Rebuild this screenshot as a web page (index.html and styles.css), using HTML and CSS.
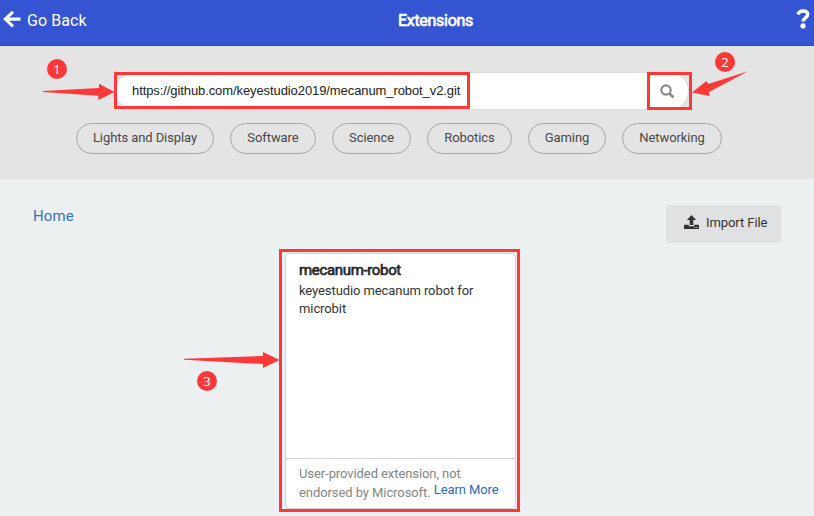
FILE: index.html
```html
<!DOCTYPE html>
<html lang="en">
<head>
<meta charset="utf-8">
<title>Extensions</title>
<link rel="stylesheet" href="styles.css">
</head>
<body>
<header class="topbar">
  <a class="back"><svg width="18" height="18" viewBox="0 0 18 18"><path d="M10 1.8 2.3 9.1 10 16.4M3 9.1H17.5" fill="none" stroke="#fff" stroke-width="3.1"/></svg><span>Go Back</span></a>
  <h1>Extensions</h1>
  <svg class="help" width="14" height="20" viewBox="0 0 14 20"><path d="M1.8 5.2C3 2.7 4.7 1.9 7 1.9c2.9 0 4.7 1.5 4.7 3.7 0 3.3-4.6 3.3-4.6 6.9" fill="none" stroke="#fff" stroke-width="3.5"/><circle cx="7" cy="16.9" r="2.6" fill="#fff"/></svg>
</header>
<section class="search-area">
  <div class="search">
    <span class="url">https://github.com/keyestudio2019/mecanum_robot_v2.git</span>
    <svg class="glass" width="15" height="15" viewBox="0 0 15 15"><circle cx="6" cy="6" r="4.7" fill="none" stroke="#8a8a8a" stroke-width="2.2"/><path d="m9.5 9.5 4 4" stroke="#8a8a8a" stroke-width="2.5"/></svg>
  </div>
  <nav class="tags">
    <a class="tag lights">Lights and Display</a><a class="tag software">Software</a><a class="tag science">Science</a><a class="tag robotics">Robotics</a><a class="tag gaming">Gaming</a><a class="tag networking">Networking</a>
  </nav>
</section>
<main>
  <div class="toolbar">
    <a class="home">Home</a>
    <button class="import"><svg width="15" height="15" viewBox="0 0 15 15"><path d="M7.5 0 12.2 5H9.3v5H5.7V5H2.8zM0 9.7h4.7v1.5h5.6V9.7H15V14H0z" fill="#333"/><path d="M10.3 12.5h1m1 0h1" stroke="#e0e1e2"/></svg><span>Import File</span></button>
  </div>
  <article class="card">
    <div class="content">
      <h2>mecanum-robot</h2>
      <p>keyestudio mecanum robot for microbit</p>
    </div>
    <footer>User-provided extension, not<br>endorsed by Microsoft. <a>Learn More</a></footer>
  </article>
</main>
<div class="mark mark-url"></div>
<div class="mark mark-search"></div>
<div class="mark mark-card"></div>
<svg class="arrows" width="814" height="516" viewBox="0 0 814 516" fill="#fd3838">
  <path d="M43 91 99 88V83.7L114.5 92 98.3 100V95.8L43 92z"/>
  <path d="M692 92.5 706.5 81 708.3 84 748 71.3 709 92 709.7 96z"/>
  <path d="M184 358.8 263 356V352L279.5 360 263 368V364L184 359.8z"/>
</svg>
<span class="badge one">1</span>
<span class="badge two">2</span>
<span class="badge three">3</span>
</body>
</html>
```
FILE: styles.css
```css
* { box-sizing: border-box; }
body { margin: 0; width: 814px; height: 516px; overflow: hidden; position: relative; background: #ecf0f1; color: #333; font: 13px/18px Roboto, sans-serif; }
h1, h2, p { margin: 0; }
.topbar { height: 46px; background: #3454d1; border-bottom: 1px solid #2c47b4; color: #fff; display: grid; grid-template-columns: 395px auto 1fr; padding: 0 4px 6px 3px; align-items: center; }
.back { display: flex; align-items: center; gap: 6px; font-size: 16px; letter-spacing: .07px; }
.back svg { margin-top: -1px; }
.back span { margin-top: 3px; }
h1 { font: 400 16px/18px Roboto, sans-serif; letter-spacing: -.3px; margin-top: 2px; -webkit-text-stroke: .7px #fff; }
.help { justify-self: end; margin-top: -1px; }
.search-area { height: 133px; background: #e4e4e4; padding-top: 26px; }
.search { width: 574px; height: 38px; margin-left: 115px; border: 1px solid #dcdcdc; border-radius: 19px; background: #fff; display: flex; align-items: center; justify-content: space-between; padding: 0 13px 0 16px; color: #222; }
.url { font-family: "Liberation Sans", sans-serif; letter-spacing: -.09px; }
.tags { display: flex; gap: 16px; margin: 13px 0 0 76px; }
.tag { height: 31px; border: 1px solid #a5a5a5; border-radius: 16px; display: flex; align-items: center; justify-content: center; color: #484848; padding: 0 0 1px; letter-spacing: -.08px; }
.lights { width: 138px; }
.software { width: 86px; }
.science { width: 79px; }
.robotics { width: 85px; }
.gaming { width: 78px; }
.networking { width: 100px; }
.toolbar { display: flex; justify-content: space-between; padding: 26px 33px 0; }
.home { font-size: 15px; line-height: 22px; color: #3573b5; letter-spacing: .1px; }
.import { width: 115px; height: 38px; border: 0; border-radius: 3px; background: #e0e1e2; color: #333; font: 13px Roboto, sans-serif; letter-spacing: -.08px; display: flex; align-items: center; padding: 0 0 3px 18px; gap: 7px; }
.card { width: 231px; height: 256px; margin: 10px 0 0 285px; background: #fff; border: 1px solid #d4d5d6; border-radius: 5px; display: flex; flex-direction: column; }
.content { flex: 1; padding: 7px 13px; }
h2 { font-size: 15px; font-weight: 400; line-height: 18px; color: #222; letter-spacing: -.34px; -webkit-text-stroke: .6px #222; }
.content p { margin-top: 3px; letter-spacing: -.09px; }
footer { height: 50px; border-top: 1px solid #d4d5d6; padding: 5px 13px; color: #858585; line-height: 19px; letter-spacing: -.08px; white-space: nowrap; }
footer a { color: #3469b0; position: relative; top: -3px; }
.mark { position: absolute; border: 3px solid #fd3838; }
.mark-url { left: 114px; top: 72px; width: 356px; height: 37px; }
.mark-search { left: 647px; top: 72px; width: 45px; height: 38px; }
.mark-card { left: 279px; top: 249px; width: 241px; height: 263px; }
.arrows { position: absolute; left: 0; top: 0; }
.badge { position: absolute; width: 20px; height: 20px; border-radius: 50%; background: #fd3838; color: #fff; font: 13px/20px "Noto Sans", sans-serif; text-align: center; }
.one { left: 47px; top: 59px; }
.two { left: 715px; top: 52px; }
.three { left: 197px; top: 371px; }
```
